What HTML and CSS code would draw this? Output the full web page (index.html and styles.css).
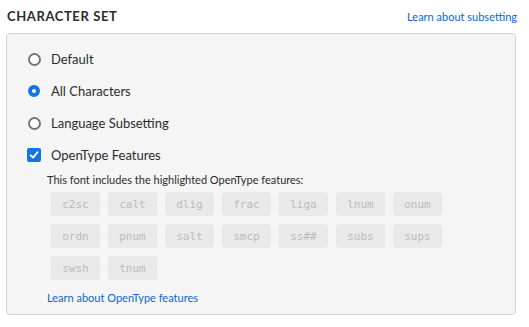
FILE: index.html
```html
<!DOCTYPE html>
<html lang="en">
<head>
  <meta charset="UTF-8" />
  <title>Character Set</title>
  <link rel="stylesheet" href="styles.css">
</head>
<body>

  <div class="panel">
    <div class="panel-head">
      <h2>Character Set</h2>
      <a href="#" class="link">Learn about subsetting</a>
    </div>

    <div class="box">
      <label class="option">
        <span class="radio"></span> Default
      </label>
      <label class="option">
        <span class="radio checked"></span> All Characters
      </label>
      <label class="option">
        <span class="radio"></span> Language Subsetting
      </label>
      <label class="option">
        <span class="checkbox">
          <svg width="10" height="10" viewBox="0 0 10 10"><path d="M1.5 5.2 L4 7.6 L8.6 2.2" fill="none" stroke="#fff" stroke-width="1.8" stroke-linecap="round" stroke-linejoin="round"/></svg>
        </span> OpenType Features
      </label>

      <div class="features">
        <p class="note">This font includes the highlighted OpenType features:</p>
        <div class="tags">
          <span class="tag">c2sc</span>
          <span class="tag">calt</span>
          <span class="tag">dlig</span>
          <span class="tag">frac</span>
          <span class="tag">liga</span>
          <span class="tag">lnum</span>
          <span class="tag">onum</span>
          <span class="tag">ordn</span>
          <span class="tag">pnum</span>
          <span class="tag">salt</span>
          <span class="tag">smcp</span>
          <span class="tag">ss##</span>
          <span class="tag">subs</span>
          <span class="tag">sups</span>
          <span class="tag">swsh</span>
          <span class="tag">tnum</span>
        </div>
        <a href="#" class="link">Learn about OpenType features</a>
      </div>
    </div>
  </div>

</body>
</html>
```

FILE: styles.css
```css
body {
  font-family: Lato, "Open Sans", sans-serif;
  background: #fff;
  color: #2c2c2c;
  margin: 0;
}

.panel {
  width: 511px;
  margin-left: 6px;
}

.panel-head {
  display: flex;
  justify-content: space-between;
  align-items: center;
  height: 33px;
  padding-left: 1px;
  box-sizing: border-box;
}

h2 {
  margin: 0;
  font-size: 13px;
  font-weight: bold;
  text-transform: uppercase;
  letter-spacing: 0.6px;
  margin-top: -2px;
}

.link {
  font-size: 11px;
  color: #0d66d0;
  text-decoration: none;
}

.box {
  width: 510px;
  box-sizing: border-box;
  background: #f5f5f5;
  border: 1px solid #d4d4d4;
  border-radius: 4px;
  padding: 9px 20px 9px 20px;
}

.option {
  display: flex;
  align-items: center;
  gap: 10px;
  height: 32px;
  font-size: 13px;
  cursor: pointer;
}

.radio {
  width: 14px;
  height: 14px;
  display: flex;
  align-items: center;
  justify-content: center;
}
.radio::before {
  content: "";
  width: 9px;
  height: 9px;
  border: 2px solid #767676;
  border-radius: 50%;
  background: #fff;
}
.radio.checked::before {
  width: 4px;
  height: 4px;
  border: 4.5px solid #1473e6;
}

.checkbox {
  width: 14px;
  height: 14px;
  border-radius: 2px;
  background: #1473e6;
  display: flex;
  align-items: center;
  justify-content: center;
}

.features {
  padding-left: 20px;
  margin-top: 2px;
}

.note {
  margin: 0;
  font-size: 11px;
  line-height: 14px;
}

.tags {
  display: grid;
  grid-template-columns: repeat(7, 49px);
  grid-auto-rows: 24px;
  gap: 8px;
  margin: 5px 0 11px 4px;
}

.tag {
  background: #e9e9e9;
  color: #bcbcbc;
  border-radius: 3px;
  font-family: "DejaVu Sans Mono", monospace;
  font-size: 11px;
  display: flex;
  align-items: center;
  justify-content: center;
}

.features .link {
  display: block;
  line-height: 14px;
}
```
